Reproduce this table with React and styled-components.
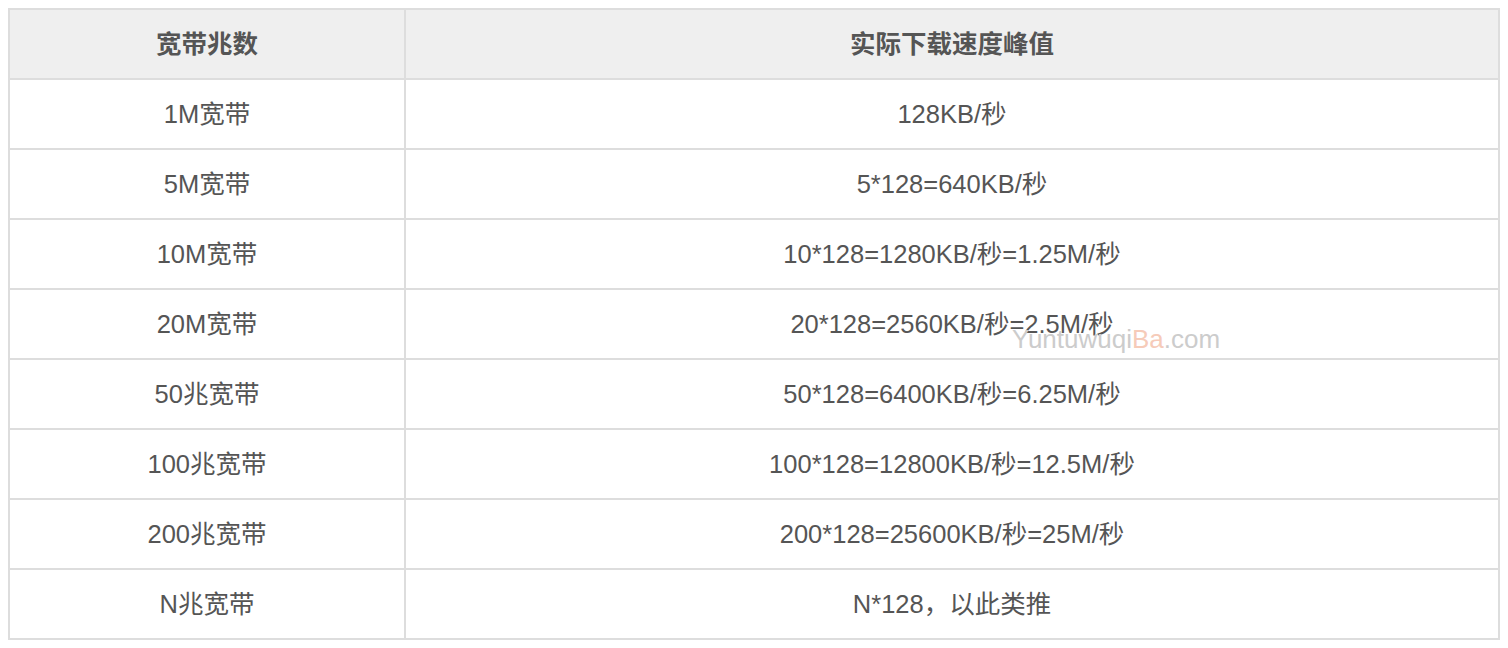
import styled, { createGlobalStyle } from "styled-components";

const rows = [
  ["1M宽带", "128KB/秒"],
  ["5M宽带", "5*128=640KB/秒"],
  ["10M宽带", "10*128=1280KB/秒=1.25M/秒"],
  ["20M宽带", "20*128=2560KB/秒=2.5M/秒"],
  ["50兆宽带", "50*128=6400KB/秒=6.25M/秒"],
  ["100兆宽带", "100*128=12800KB/秒=12.5M/秒"],
  ["200兆宽带", "200*128=25600KB/秒=25M/秒"],
  ["N兆宽带", "N*128，以此类推"],
];

export default function App() {
  return (
    <Page>
      <GlobalStyle />
      <Table>
        <colgroup>
          <col style={{ width: 396 }} />
          <col />
        </colgroup>
        <thead>
          <tr>
            <Th>宽带兆数</Th>
            <Th>实际下载速度峰值</Th>
          </tr>
        </thead>
        <tbody>
          {rows.map(([a, b]) => (
            <tr key={a}>
              <Td>{a}</Td>
              <Td>{b}</Td>
            </tr>
          ))}
        </tbody>
      </Table>
      <Watermark>
        Yuntuwuqi<span>Ba</span>.com
      </Watermark>
    </Page>
  );
}

const GlobalStyle = createGlobalStyle`
  body {
    margin: 8px;
    background: #ffffff;
    font-family: "Liberation Sans", "Noto Sans CJK SC", sans-serif;
  }
`;

const Page = styled.div`
  position: relative;
`;

const Table = styled.table`
  width: 100%;
  border-collapse: collapse;
  table-layout: fixed;
  border: 2px solid #dddddd;
`;

const Th = styled.th`
  box-sizing: border-box;
  height: 70px;
  padding: 0 0 6px;
  background: #efefef;
  border: 2px solid #dddddd;
  color: #555555;
  font-size: 25.5px;
  font-weight: bold;
  text-align: center;
  vertical-align: middle;
`;

const Td = styled.td`
  box-sizing: border-box;
  height: 70px;
  padding: 0 0 6px;
  border: 2px solid #dddddd;
  color: #555555;
  font-size: 25.5px;
  text-align: center;
  vertical-align: middle;
`;

const Watermark = styled.div`
  position: absolute;
  left: 1004px;
  top: 318px;
  font-size: 26px;
  line-height: 1;
  color: #cccccc;
  pointer-events: none;

  span {
    color: #f6cbb9;
  }
`;
